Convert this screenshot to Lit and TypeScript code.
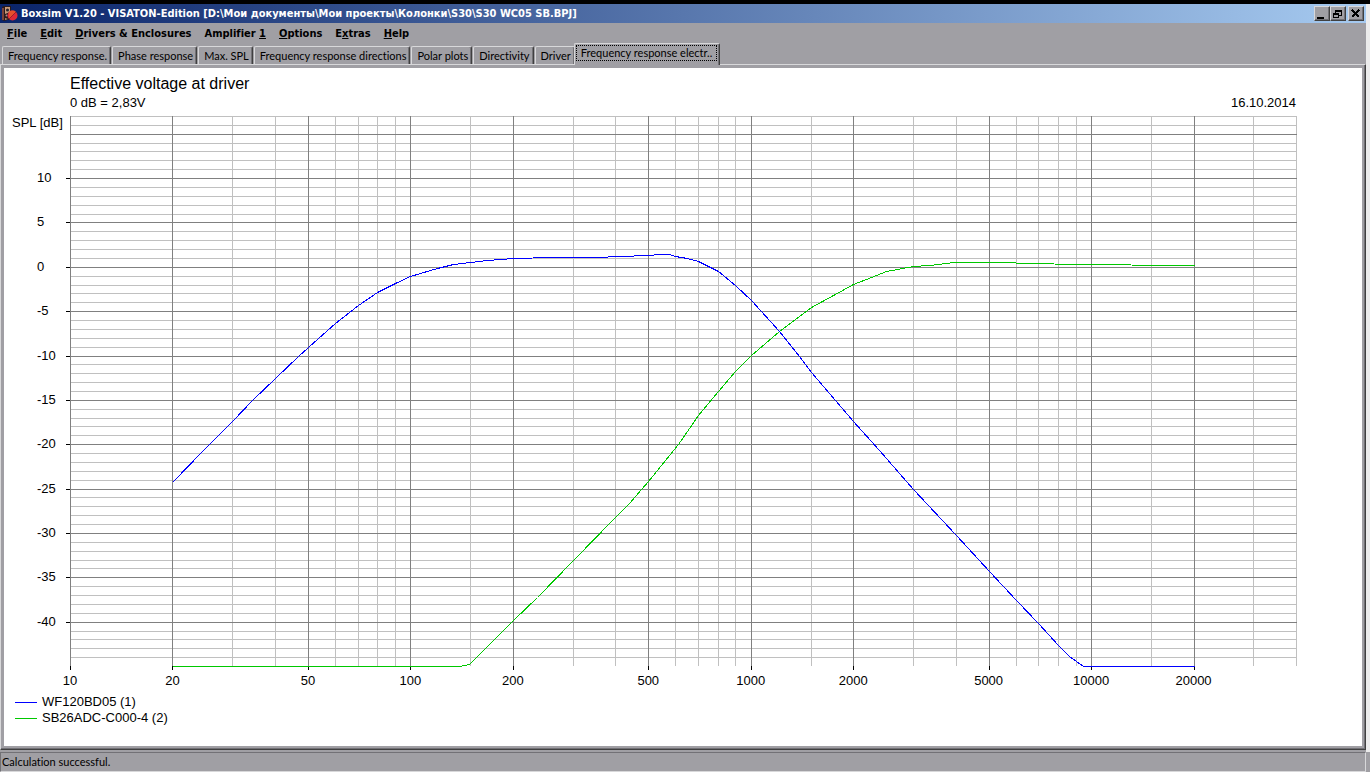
import { LitElement, html, svg, css } from "lit";
import { customElement, property, state, query } from "lit/decorators.js";
import { classMap } from "lit/directives/class-map.js";

type Point = [hz: number, db: number];

interface Series {
  name: string;
  color: string;
  points: Point[];
}

const WOOFER: Series = {
  name: "WF120BD05 (1)",
  color: "#0000ff",
  points: [
    [20, -24.3], [24.6, -20.7], [30, -17.35], [34.2, -15.05], [40, -12.5],
    [46.9, -10.1], [50, -9.08], [60, -6.37], [70, -4.31], [80, -2.87],
    [90, -1.79], [100, -1.04], [107, -0.73], [120, -0.15], [133, 0.32],
    [150, 0.56], [168, 0.8], [200, 0.98], [260, 1.06], [350, 1.1],
    [413, 1.18], [500, 1.33], [537, 1.4], [575, 1.4], [600, 1.25],
    [650, 1.0], [700, 0.62], [750, 0.12], [800, -0.51], [900, -2.02],
    [1000, -3.74], [1209, -7.27], [1383, -10.05], [1500, -11.86],
    [1770, -15.05], [2000, -17.4], [2375, -20.65], [3000, -25], [4000, -30.2],
    [5000, -34.3], [6000, -37.57], [7000, -40.1], [8000, -42.58],
    [8630, -43.9], [9480, -45], [20000, -45],
  ],
};

const TWEETER: Series = {
  name: "SB26ADC-C000-4 (2)",
  color: "#00c800",
  points: [
    [20, -45], [139, -45], [148.6, -44.78], [155, -44.05], [180.5, -41.45],
    [200, -39.8], [235, -37.2], [300, -33.1], [400, -28.25], [440, -26.6],
    [500, -24.15], [559, -21.8], [611, -20], [700, -16.76], [800, -13.97],
    [900, -11.7], [1000, -9.98], [1209, -7.27], [1500, -4.57],
    [1745, -3.18], [2000, -1.94], [2250, -1.15], [2505, -0.51], [3000, 0.04],
    [3340, 0.25], [3960, 0.5], [5950, 0.5], [6050, 0.4], [9900, 0.35],
    [10000, 0.3], [17000, 0.25], [20000, 0.2],
  ],
};

const SERIES = [WOOFER, TWEETER];

const MIN_HZ = 10;
const MAX_HZ = 40000;
const MIN_DB = -45;
const MAX_DB = 17;

const MINOR_HZ = [30, 40, 60, 70, 80, 90, 150, 300, 400, 600, 700, 800, 900,
  1500, 3000, 4000, 6000, 7000, 8000, 9000, 15000, 30000, 40000];
const MAJOR_HZ = [10, 20, 50, 100, 200, 500, 1000, 2000, 5000, 10000, 20000];

@customElement("response-chart")
export class ResponseChart extends LitElement {
  @property({ attribute: false }) series: Series[] = [];
  @state() private w = 1226;
  @state() private h = 550;
  @query(".plot") private plot!: HTMLElement;
  private observer?: ResizeObserver;

  static styles = css`
    :host {
      display: grid;
      grid-template-columns: 66px 1fr;
      grid-template-rows: 1fr 22px;
      color: #000;
      font: 13px/16px "Liberation Sans", Arial, sans-serif;
    }
    .labels {
      position: relative;
    }
    .unit {
      position: absolute;
      left: 8px;
      top: -1px;
      white-space: nowrap;
    }
    .db {
      position: absolute;
      left: 33px;
      transform: translateY(-50%);
    }
    .plot {
      position: relative;
      min-width: 0;
      min-height: 0;
    }
    svg {
      position: absolute;
      inset: 0;
      width: 100%;
      height: 100%;
      overflow: visible;
      shape-rendering: crispEdges;
      fill: none;
    }
    .minor { stroke: #c0c0c0; }
    .major { stroke: #808080; }
    .tick { stroke: #000; }
    .hz {
      grid-column: 2;
      position: relative;
    }
    .hz span {
      position: absolute;
      top: 7px;
      transform: translateX(-50%);
    }
  `;

  firstUpdated() {
    const measure = () => {
      this.w = this.plot.clientWidth;
      this.h = this.plot.clientHeight;
    };
    measure();
    this.observer = new ResizeObserver(measure);
    this.observer.observe(this.plot);
  }

  disconnectedCallback() {
    super.disconnectedCallback();
    this.observer?.disconnect();
  }

  private fx(hz: number) {
    return Math.log10(hz / MIN_HZ) / Math.log10(MAX_HZ / MIN_HZ);
  }

  private fy(db: number) {
    return (MAX_DB - db) / (MAX_DB - MIN_DB);
  }

  private px(hz: number) {
    return Math.round(this.fx(hz) * this.w) + 0.5;
  }

  private py(db: number) {
    return Math.round(this.fy(db) * this.h) + 0.5;
  }

  render() {
    const rows: number[] = [];
    for (let db = MAX_DB; db > MIN_DB; db--) rows.push(db);
    const steps = rows.filter((db) => db % 5 === 0);
    const labelled = steps.filter((db) => db <= 10);
    const h = (db: number, cls: string) =>
      svg`<path class=${cls} d="M0 ${this.py(db)}H${this.w + 1}"></path>`;
    const v = (hz: number, cls: string) =>
      svg`<path class=${cls} d="M${this.px(hz)} 0V${this.h}"></path>`;
    const line = (s: Series) => s.points
      .map(([hz, db]) => `${this.px(hz)},${this.py(db)}`)
      .join(" ");
    return html`
      <div class="labels">
        <span class="unit">SPL [dB]</span>
        ${labelled.map((db) => html`<span class="db" style="top:${this.fy(db) * 100}%">${db}</span>`)}
      </div>
      <div class="plot">
        <svg role="img" aria-label="Effective voltage at driver">
          ${rows.filter((db) => db % 5).map((db) => h(db, "minor"))}
          ${MINOR_HZ.map((hz) => v(hz, "minor"))}
          ${steps.map((db) => h(db, "major"))}
          ${MAJOR_HZ.map((hz) => v(hz, "major"))}
          ${labelled.map((db) => svg`<path class="tick" d="M-4 ${this.py(db)}H0"></path>`)}
          ${MAJOR_HZ.map((hz) => svg`<path class="tick" d="M${this.px(hz)} ${this.h}v4"></path>`)}
          ${[...this.series].reverse().map((s) => svg`<polyline points=${line(s)} stroke=${s.color}></polyline>`)}
        </svg>
      </div>
      <div class="hz">
        ${MAJOR_HZ.map((hz) => html`<span style="left:${this.fx(hz) * 100}%">${hz}</span>`)}
      </div>
    `;
  }
}

const MENUS: [before: string, key: string, after: string][] = [
  ["", "F", "ile"],
  ["", "E", "dit"],
  ["", "D", "rivers & Enclosures"],
  ["Amplifier ", "1", ""],
  ["", "O", "ptions"],
  ["E", "x", "tras"],
  ["", "H", "elp"],
];

const TABS = [
  "Frequency response.",
  "Phase response",
  "Max. SPL",
  "Frequency response directions",
  "Polar plots",
  "Directivity",
  "Driver",
  "Frequency response electr..",
];

@customElement("app-root")
export class AppRoot extends LitElement {
  @state() private active = TABS.length - 1;

  static styles = css`
    :host {
      display: flex;
      flex-direction: column;
      box-sizing: border-box;
      height: 100vh;
      overflow: hidden;
      border-top: 4px solid #000;
      background: #a09fa4;
      color: #000;
      font: 11px/14px Lato, "Liberation Sans", sans-serif;
      font-variant-ligatures: none;
    }
    button {
      font: inherit;
      font-variant-ligatures: none;
      color: inherit;
      background: none;
      border: 0;
      margin: 0;
      padding: 0;
      white-space: nowrap;
    }
    .window {
      flex: 1;
      min-height: 0;
      display: flex;
      flex-direction: column;
      border-right: 4px solid #ececec;
    }
    .title {
      display: flex;
      align-items: center;
      height: 19px;
      padding: 0 2px;
      background: linear-gradient(90deg, #0a246a, #a6caf0);
      color: #fff;
      font: bold 11px/15px "DejaVu Sans Condensed", "DejaVu Sans", sans-serif;
    }
    .title h1 {
      flex: 1;
      margin: 0 0 0 3px;
      font: inherit;
      white-space: nowrap;
    }
    .ctl {
      width: 16px;
      height: 15px;
      box-sizing: border-box;
      background: #a09fa4;
      border: 1px solid;
      border-color: #d8d8da #404040 #404040 #d8d8da;
      box-shadow: inset -1px -1px #727176;
    }
    .ctl.close { margin-left: 2px; }
    .ctl svg {
      display: block;
      fill: none;
      stroke: #000;
      shape-rendering: crispEdges;
    }
    .menu {
      display: flex;
      height: 20px;
      padding-left: 1px;
      font: bold 11px/21px "DejaVu Sans Condensed", "DejaVu Sans", sans-serif;
    }
    .menu button { padding: 0 7px 0 6px; }
    u {
      text-decoration-thickness: 1px;
      text-underline-offset: 1px;
    }
    .tabs {
      display: flex;
      align-items: flex-end;
      height: 21px;
      padding-left: 2px;
    }
    .tab {
      height: 18px;
      padding: 0 3px 0 5px;
      border: solid;
      border-width: 1px 1px 0;
      border-color: #d8d8da #404040 #404040 #d8d8da;
      border-radius: 2px 2px 0 0;
      box-shadow: inset -1px 0 #727176;
      margin-right: 1px;
    }
    .tab.on {
      position: relative;
      height: 22px;
      margin: 0 0 -1px -2px;
      padding: 0 2px 3px 1px;
      background: #a09fa4;
    }
    .tab.on span {
      display: block;
      padding: 0 5px;
      line-height: 16px;
      outline: 1px dotted #000;
      outline-offset: -1px;
    }
    .page {
      flex: 1;
      min-height: 0;
      display: flex;
      border: 1px solid;
      border-color: #d8d8da #404040 #404040 #d8d8da;
      box-shadow: inset -1px -1px #727176;
      padding: 3px;
    }
    .sheet {
      flex: 1;
      display: flex;
      flex-direction: column;
      background: #fff;
      padding: 6px 66px 20px 0;
      font: 13px/16px "Liberation Sans", Arial, sans-serif;
    }
    .sheet h2 {
      margin: 0 0 0 66px;
      font-size: 16px;
      line-height: 20px;
      font-weight: 400;
    }
    .sub {
      display: flex;
      justify-content: space-between;
      margin-left: 66px;
      padding: 1px 0 5px;
    }
    response-chart { flex: 1; min-height: 0; }
    .legend {
      margin: 0;
      padding: 6px 0 0 11px;
      list-style: none;
    }
    .legend li {
      display: flex;
      align-items: center;
      gap: 5px;
    }
    .swatch {
      width: 22px;
      height: 1px;
    }
    .gap { height: 2px; }
    .status {
      height: 20px;
      box-sizing: border-box;
      border: 1px solid;
      border-color: #727176 #d8d8da #d8d8da #727176;
      padding: 2px 1px;
      margin-right: 4px;
    }
  `;

  private icon() {
    return html`<svg width="16" height="16" viewBox="0 0 16 16" aria-hidden="true">
      <path d="M0 1L2 0H9V13L2 15L0 14Z" fill="#2a1a1c"></path>
      <path d="M3 1H8V6L3 8Z" fill="#c79a78"></path>
      <path d="M0 2H2V14H0Z" fill="#7a4238"></path>
      <circle cx="5.500" cy="4" r="1.500" fill="#26222c"></circle>
      <path d="M3 12L6 13L3 14Z" fill="#b98a6a"></path>
      <circle cx="4.500" cy="9.500" r="1" fill="#9a8a8a"></circle>
      <circle cx="10.500" cy="9.500" r="5" fill="#e02838"></circle>
      <path d="M7 13L14 6A5 5 0 0 0 7 6Z" fill="#e8502c"></path>
      <path d="M7 13L14 6" stroke="#a01c28"></path>
    </svg>`;
  }

  render() {
    return html`
      <div class="window">
        <header class="title">
          ${this.icon()}
          <h1>Boxsim V1.20 - VISATON-Edition [D:\\Мои документы\\Мои проекты\\Колонки\\S30\\S30 WC05 SB.BPJ]</h1>
          <button class="ctl" aria-label="Minimize">
            <svg width="13" height="12"><path d="M2 10H9" stroke-width="2"></path></svg>
          </button>
          <button class="ctl" aria-label="Restore">
            <svg width="13" height="12">
              <path d="M4 3H11M2 6H8" stroke-width="2"></path>
              <path d="M4.500 3V5M10.500 3V7.500H8M2.500 6V9.500H7.500V6"></path>
            </svg>
          </button>
          <button class="ctl close" aria-label="Close">
            <svg width="13" height="12"><path d="M3 2L10 9M10 2L3 9" stroke-width="2"></path></svg>
          </button>
        </header>
        <nav class="menu">
          ${MENUS.map(([before, key, after]) => html`<button>${before}<u>${key}</u>${after}</button>`)}
        </nav>
        <div class="tabs" role="tablist">
          ${TABS.map((name, i) => html`<button
            role="tab"
            aria-selected=${i === this.active ? "true" : "false"}
            class=${classMap({ tab: true, on: i === this.active })}
            @click=${() => (this.active = i)}
          ><span>${name}</span></button>`)}
        </div>
        <main class="page">
          <section class="sheet">
            <h2>Effective voltage at driver</h2>
            <div class="sub"><span>0 dB = 2,83V</span><time datetime="2014-10-16">16.10.2014</time></div>
            <response-chart .series=${SERIES}></response-chart>
            <ul class="legend">
              ${SERIES.map((s) => html`<li><i class="swatch" style="background:${s.color}"></i>${s.name}</li>`)}
            </ul>
          </section>
        </main>
        <div class="gap"></div>
      </div>
      <footer class="status">Calculation successful.</footer>
    `;
  }
}
